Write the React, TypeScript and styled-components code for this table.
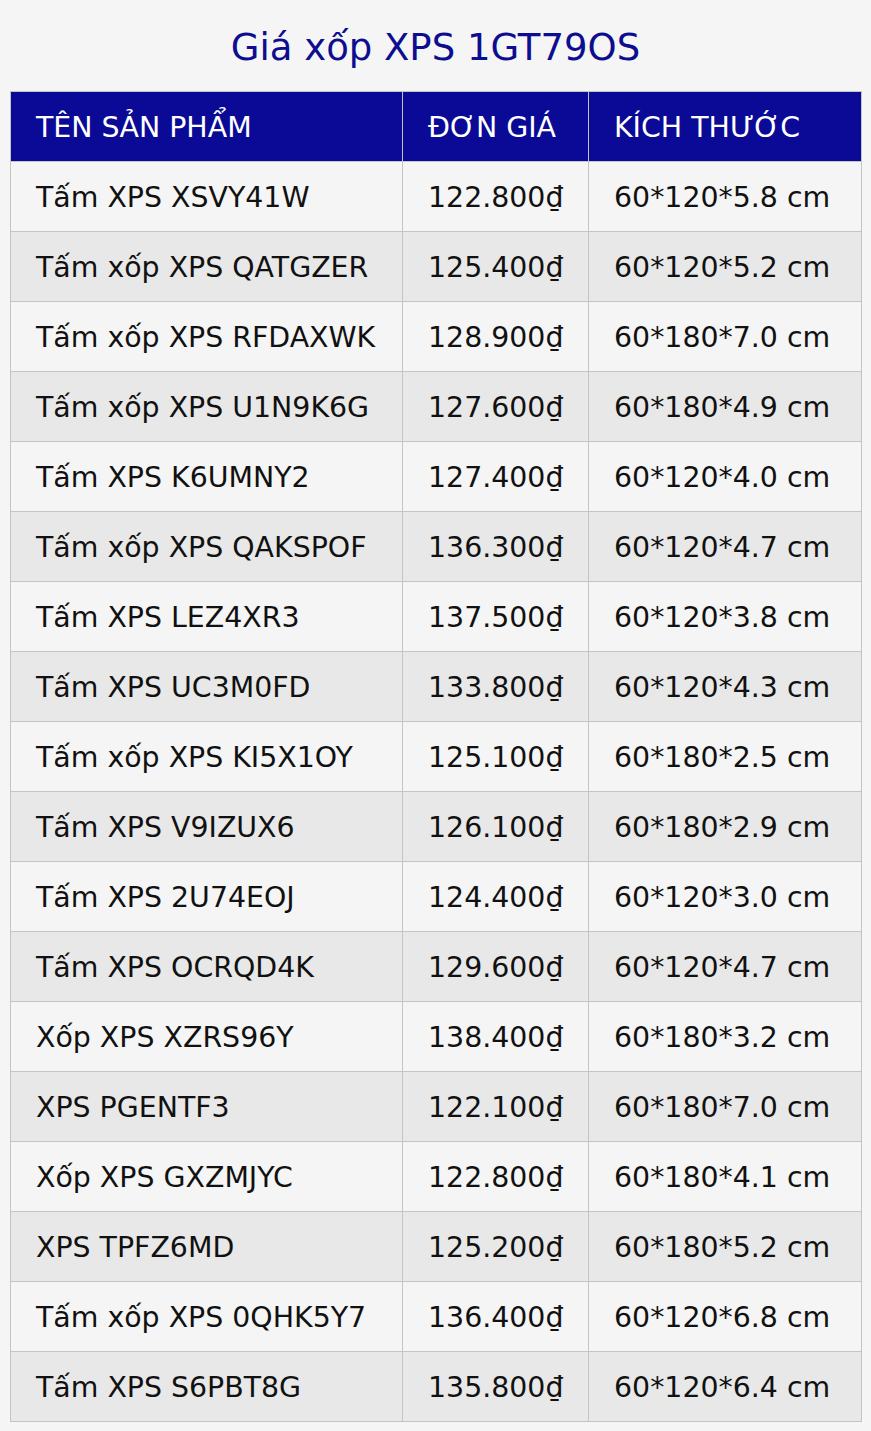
import React from "react";
import styled, { createGlobalStyle } from "styled-components";

const Global = createGlobalStyle`
  html, body {
    margin: 0;
    padding: 0;
    background: #f5f5f5;
  }
  body {
    font-family: "DejaVu Sans", Verdana, sans-serif;
  }
`;

const Page = styled.div`
  padding: 0 10px 10px;
  background: #f5f5f5;
`;

const Title = styled.h1`
  margin: 0;
  padding: 26px 0 22px;
  font-size: 37px;
  line-height: 43px;
  font-weight: normal;
  text-align: center;
  color: #0d0d8f;
`;

const Table = styled.table`
  width: 851px;
  border-collapse: collapse;
  table-layout: fixed;
  font-size: 28.4px;
  color: #111;
`;

const HeadCell = styled.th<{ $w: number }>`
  width: ${(p) => p.$w}px;
  height: 70px;
  padding: 2px 25px 0;
  box-sizing: border-box;
  background: #0a0a96;
  color: #fff;
  font-weight: normal;
  text-align: left;
  white-space: nowrap;
  border: 1px solid #c4c4c4;
`;

const Row = styled.tr<{ $alt: boolean }>`
  background: ${(p) => (p.$alt ? "#e8e8e8" : "#f5f5f5")};
`;

const Cell = styled.td`
  height: 70px;
  padding: 2px 25px 0;
  box-sizing: border-box;
  white-space: nowrap;
  border: 1px solid #c4c4c4;
`;

const rows: [string, string, string][] = [
  ["Tấm XPS XSVY41W", "122.800₫", "60*120*5.8 cm"],
  ["Tấm xốp XPS QATGZER", "125.400₫", "60*120*5.2 cm"],
  ["Tấm xốp XPS RFDAXWK", "128.900₫", "60*180*7.0 cm"],
  ["Tấm xốp XPS U1N9K6G", "127.600₫", "60*180*4.9 cm"],
  ["Tấm XPS K6UMNY2", "127.400₫", "60*120*4.0 cm"],
  ["Tấm xốp XPS QAKSPOF", "136.300₫", "60*120*4.7 cm"],
  ["Tấm XPS LEZ4XR3", "137.500₫", "60*120*3.8 cm"],
  ["Tấm XPS UC3M0FD", "133.800₫", "60*120*4.3 cm"],
  ["Tấm xốp XPS KI5X1OY", "125.100₫", "60*180*2.5 cm"],
  ["Tấm XPS V9IZUX6", "126.100₫", "60*180*2.9 cm"],
  ["Tấm XPS 2U74EOJ", "124.400₫", "60*120*3.0 cm"],
  ["Tấm XPS OCRQD4K", "129.600₫", "60*120*4.7 cm"],
  ["Xốp XPS XZRS96Y", "138.400₫", "60*180*3.2 cm"],
  ["XPS PGENTF3", "122.100₫", "60*180*7.0 cm"],
  ["Xốp XPS GXZMJYC", "122.800₫", "60*180*4.1 cm"],
  ["XPS TPFZ6MD", "125.200₫", "60*180*5.2 cm"],
  ["Tấm xốp XPS 0QHK5Y7", "136.400₫", "60*120*6.8 cm"],
  ["Tấm XPS S6PBT8G", "135.800₫", "60*120*6.4 cm"],
];

export default function App() {
  return (
    <>
      <Global />
      <Page>
        <Title>Giá xốp XPS 1GT79OS</Title>
        <Table>
          <thead>
            <tr>
              <HeadCell $w={392}>TÊN SẢN PHẨM</HeadCell>
              <HeadCell $w={186}>ĐƠN GIÁ</HeadCell>
              <HeadCell $w={273}>KÍCH THƯỚC</HeadCell>
            </tr>
          </thead>
          <tbody>
            {rows.map((r, i) => (
              <Row key={i} $alt={i % 2 === 1}>
                <Cell>{r[0]}</Cell>
                <Cell>{r[1]}</Cell>
                <Cell>{r[2]}</Cell>
              </Row>
            ))}
          </tbody>
        </Table>
      </Page>
    </>
  );
}
